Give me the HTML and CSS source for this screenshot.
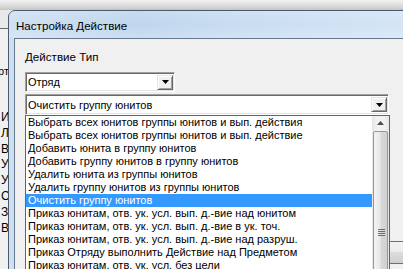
FILE: index.html
```html
<!DOCTYPE html>
<html>
<head>
<meta charset="utf-8">
<link rel="stylesheet" href="styles.css">
</head>
<body>
<div class="desktop">
  <div class="topstrip"></div>
  <div class="bgwin">
    <div class="bgline bg-rt">рт</div>
    <div class="bglist">
      <div>И</div><div>Л</div><div>В</div><div>У</div><div>У</div><div>С</div><div>З</div><div>В</div>
    </div>
  </div>
  <div class="dialog">
    <div class="titlebar">Настройка Действие</div>
    <div class="client">
      <div class="label">Действие Тип</div>
      <div class="combo combo-short">
        <span class="combo-text">Отряд</span>
        <span class="combo-btn"><svg width="7" height="4" viewBox="0 0 7 4"><path d="M0 0h7L3.5 4z" fill="#000"/></svg></span>
      </div>
      <div class="combo combo-long">
        <span class="combo-text">Очистить группу юнитов</span>
        <span class="combo-btn"><svg width="7" height="4" viewBox="0 0 7 4"><path d="M0 0h7L3.5 4z" fill="#000"/></svg></span>
        <div class="popup">
          <div class="items">
            <div class="item">Выбрать всех юнитов группы юнитов и вып. действия</div>
            <div class="item">Выбрать всех юнитов группы юнитов и вып. действие</div>
            <div class="item">Добавить юнита в группу юнитов</div>
            <div class="item">Добавить группу юнитов в группу юнитов</div>
            <div class="item">Удалить юнита из группы юнитов</div>
            <div class="item">Удалить группу юнитов из группы юнитов</div>
            <div class="item selected">Очистить группу юнитов</div>
            <div class="item">Приказ юнитам, отв. ук. усл. вып. д.-вие над юнитом</div>
            <div class="item">Приказ юнитам, отв. ук. усл. вып. д.-вие в ук. точ.</div>
            <div class="item">Приказ юнитам, отв. ук. усл. вып. д.-вие над разруш.</div>
            <div class="item">Приказ Отряду выполнить Действие над Предметом</div>
            <div class="item">Приказ юнитам, отв. ук. усл. без цели</div>
            <div class="item">Приказ юнитам, отв. ук. усл. вып. д.-вие</div>
          </div>
          <div class="vscroll">
            <div class="sb-up"><svg width="7" height="4" viewBox="0 0 7 4"><path d="M3.5 0L7 4H0z" fill="#4d4d4d"/></svg></div>
            <div class="sb-thumb"><div class="grip"><i></i><i></i><i></i><i></i></div></div>
          </div>
        </div>
      </div>
      <div class="btnrow"><div class="dlgbtn">OK</div></div>
    </div>
  </div>
</div>
</body>
</html>
```
FILE: styles.css
```css
html, body {
  margin: 0;
  padding: 0;
}
body {
  font-family: "Liberation Sans", Arial, sans-serif;
  font-size: 11px;
  color: #000;
  background: #f0f0f0;
}
.desktop {
  position: relative;
  width: 403px;
  height: 269px;
  overflow: hidden;
  background: #f0f0f0;
}
.topstrip {
  height: 10px;
  background: linear-gradient(#f2f2f2, #d6d6d6 70%, #c4c4c4);
}
.bgwin {
  position: absolute;
  left: 0;
  top: 10px;
  width: 12px;
  height: 259px;
  background: linear-gradient(#e9e9e9 0, #e9e9e9 18px, #6a6a6a 18px, #6a6a6a 19px, #f0f0f0 19px);
}
.bgline {
  position: absolute;
  left: -2px;
  top: 55px;
  font-size: 11px;
  line-height: 13px;
}
.bglist {
  position: absolute;
  left: 1px;
  top: 100px;
  font-size: 12px;
  line-height: 15.8px;
}
.dialog {
  position: absolute;
  left: 8px;
  top: 10px;
  width: 430px;
  height: 300px;
  border: 1px solid #4a5a6e;
  border-radius: 7px 7px 0 0;
  background: linear-gradient(90deg, #cfe0f1 0, #bfd6ee 30%, #cadef2 60%, #d6e6f7 100%);
  box-sizing: border-box;
}
.titlebar {
  height: 27px;
  padding-left: 7px;
  line-height: 29px;
  font-size: 11.6px;
  color: #000;
  background: linear-gradient(rgba(255,255,255,0.15), rgba(255,255,255,0) 50%, rgba(255,255,255,0.2));
}
.client {
  margin-left: 5px;
  width: 385px;
  height: 260px;
  border: 1px solid #66788e;
  background: #f0f0f0;
  padding: 11px 10px 0 10px;
  box-sizing: content-box;
  position: relative;
}
.client > .label {
  font-size: 11.6px;
  line-height: 14px;
  margin-bottom: 8px;
}
.combo {
  position: relative;
  display: flex;
  align-items: center;
  height: 20px;
  box-sizing: border-box;
  background: #fff;
  border-top: 1px solid #a0a0a0;
  border-left: 1px solid #a0a0a0;
  border-right: 1px solid #fff;
  border-bottom: 1px solid #fff;
  box-shadow: inset 1px 1px 0 #696969, inset -1px -1px 0 #e3e3e3;
}
.combo-short {
  width: 150px;
}
.combo-long {
  width: 364px;
  margin-top: 2px;
  height: 21px;
}
.combo-text {
  flex: 1;
  padding-left: 2px;
  line-height: 14px;
  font-size: 11px;
}
.combo-btn {
  width: 16px;
  height: 15px;
  margin-right: 1px;
  box-sizing: border-box;
  background: #f0f0f0;
  border-top: 1px solid #e3e3e3;
  border-left: 1px solid #e3e3e3;
  border-right: 1px solid #696969;
  border-bottom: 1px solid #696969;
  box-shadow: inset 1px 1px 0 #fff, inset -1px -1px 0 #a0a0a0;
  display: flex;
  align-items: center;
  justify-content: center;
}
.popup {
  position: absolute;
  left: -1px;
  top: 20px;
  width: 365px;
  height: 180px;
  box-sizing: border-box;
  border: 1px solid #646464;
  background: #fff;
  display: flex;
  z-index: 2;
}
.items {
  flex: 1;
  overflow: hidden;
}
.item {
  height: 13px;
  line-height: 13px;
  padding-left: 2px;
  font-size: 11px;
  white-space: nowrap;
}
.item.selected {
  background: #3399ff;
  color: #fff;
}
.vscroll {
  width: 17px;
  background: linear-gradient(90deg, #e6e6e6, #f2f2f2 30%, #f2f2f2 70%, #e6e6e6);
  display: flex;
  flex-direction: column;
}
.sb-up {
  height: 17px;
  display: flex;
  align-items: center;
  justify-content: center;
}
.sb-thumb {
  margin: 1px 1px 0 1px;
  height: 200px;
  border: 1px solid #979797;
  border-radius: 2px;
  background: linear-gradient(90deg, #f3f3f3, #e9e9e9 45%, #d8d8d8 55%, #d0d0d0);
  position: relative;
}
.grip {
  position: absolute;
  left: 4px;
  top: 97px;
  width: 7px;
}
.grip i {
  display: block;
  height: 1px;
  margin-bottom: 1px;
  background: #6e6e6e;
}
.btnrow {
  display: flex;
  justify-content: flex-end;
  margin-top: 126px;
  margin-right: -6px;
}
.dlgbtn {
  width: 70px;
  height: 23px;
  border: 1px solid #707070;
  border-radius: 3px;
  background: linear-gradient(#f2f2f2, #ebebeb 50%, #dddddd 50%, #cfcfcf);
  box-sizing: border-box;
  text-align: center;
  line-height: 21px;
}
```
